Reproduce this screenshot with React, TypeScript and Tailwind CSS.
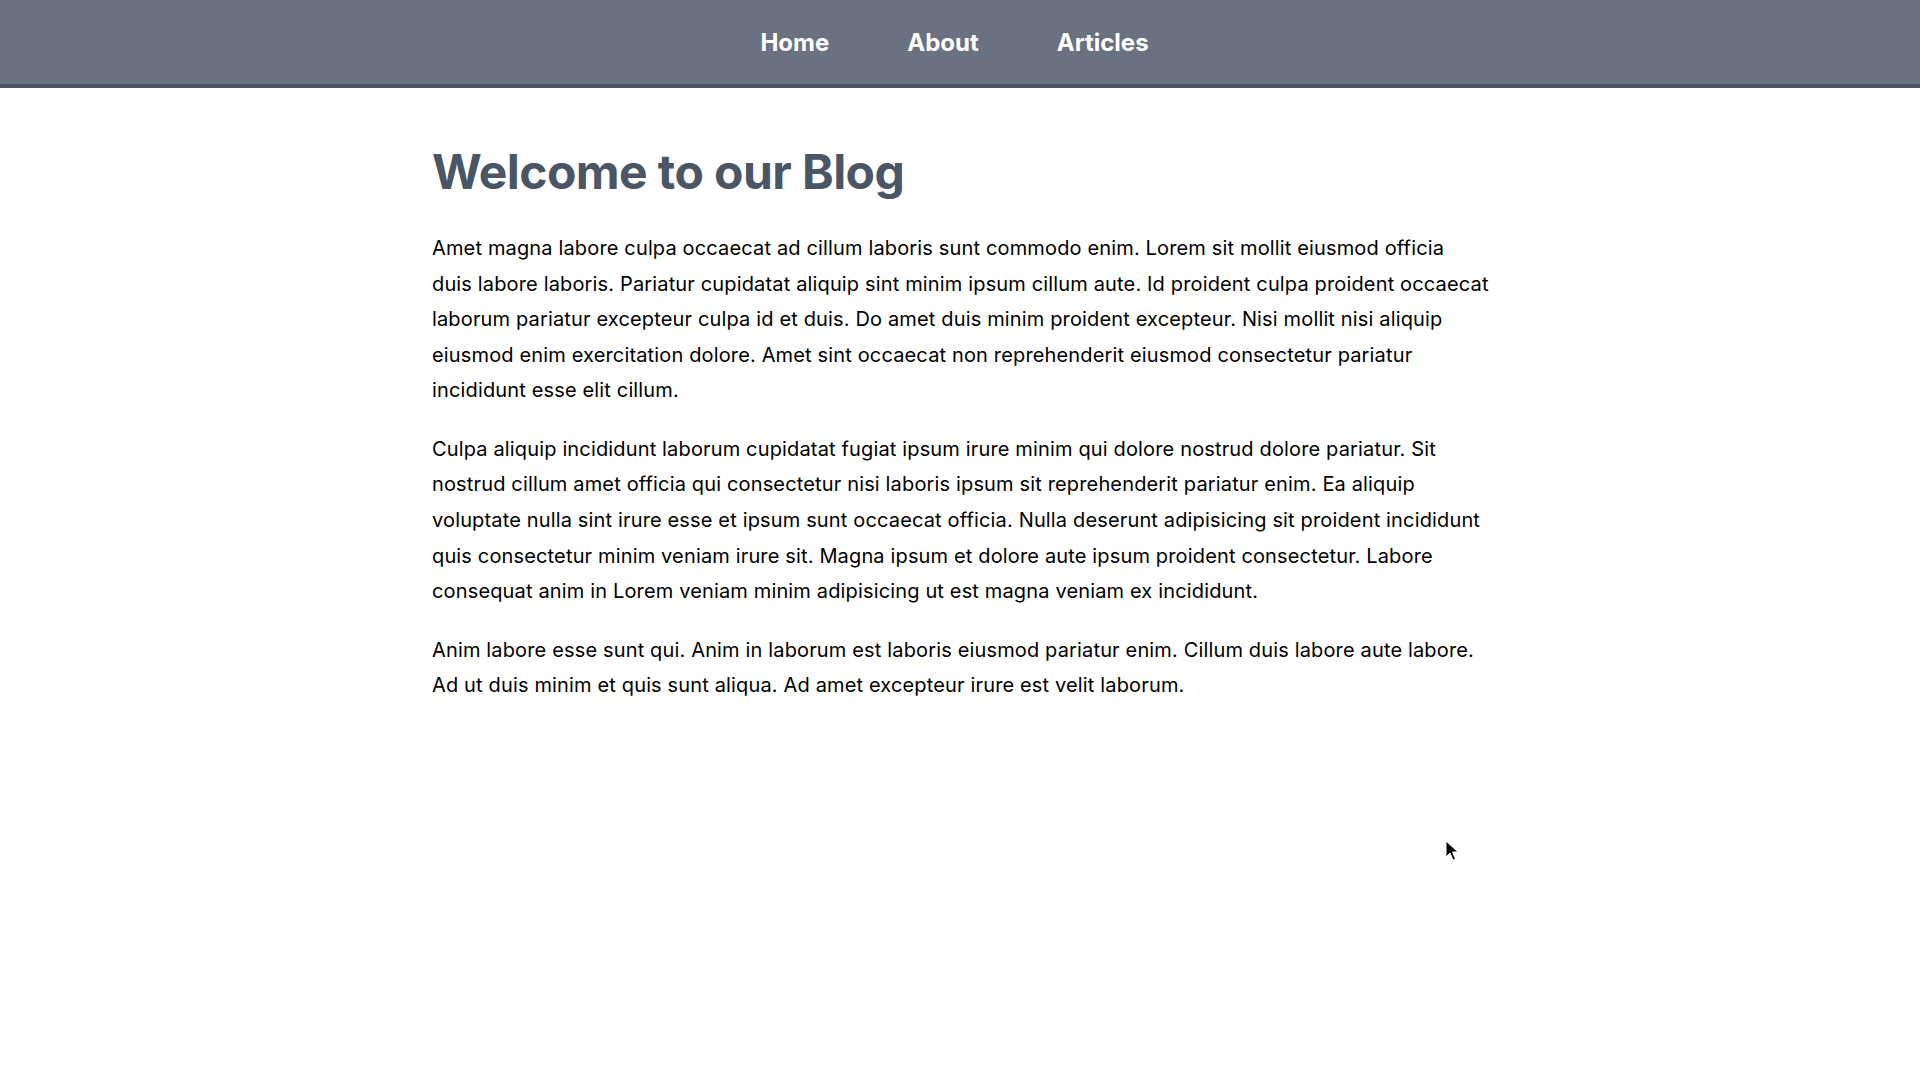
import React from 'react';

const paragraphs: React.ReactNode[] = [
  <>
    Amet magna labore culpa occaecat ad cillum laboris sunt commodo enim. Lorem sit mollit eiusmod officia
    <br />
    duis labore laboris. Pariatur cupidatat aliquip sint minim ipsum cillum aute. Id proident culpa proident occaecat laborum pariatur excepteur culpa id et duis. Do amet duis minim proident excepteur. Nisi mollit nisi aliquip eiusmod enim exercitation dolore. Amet sint occaecat non reprehenderit eiusmod consectetur pariatur incididunt esse elit cillum.
  </>,
  'Culpa aliquip incididunt laborum cupidatat fugiat ipsum irure minim qui dolore nostrud dolore pariatur. Sit nostrud cillum amet officia qui consectetur nisi laboris ipsum sit reprehenderit pariatur enim. Ea aliquip voluptate nulla sint irure esse et ipsum sunt occaecat officia. Nulla deserunt adipisicing sit proident incididunt quis consectetur minim veniam irure sit. Magna ipsum et dolore aute ipsum proident consectetur. Labore consequat anim in Lorem veniam minim adipisicing ut est magna veniam ex incididunt.',
  'Anim labore esse sunt qui. Anim in laborum est laboris eiusmod pariatur enim. Cillum duis labore aute labore. Ad ut duis minim et quis sunt aliqua. Ad amet excepteur irure est velit laborum.',
];

const links = ['Home', 'About', 'Articles'];

// mouse pointer that was caught in the screenshot
const Pointer = () => (
  <svg
    className="absolute left-[1445px] top-[840px]"
    width="14"
    height="22"
    viewBox="0 0 14 22"
  >
    <path
      d="M1 1 L1 17 L5 13 L8 20 L10.5 19 L7.5 12 L13 12 Z"
      fill="#000"
      stroke="#fff"
      strokeWidth="1"
      strokeLinejoin="round"
    />
  </svg>
);

const App = () => {
  return (
    <div className="relative min-h-screen bg-white font-['Inter',sans-serif]">
      <nav className="h-[88px] bg-gray-500 border-b-4 border-gray-600">
        <ul className="flex justify-center gap-[78px] pt-[27px] pr-[11px]">
          {links.map((l) => (
            <li key={l}>
              <a href="#" className="text-2xl font-bold text-white">
                {l}
              </a>
            </li>
          ))}
        </ul>
      </nav>

      <main className="max-w-6xl mx-auto pl-12 pr-[45px] pt-[60px]">
        <h1 className="text-5xl font-bold tracking-[-0.012em] text-gray-600 mb-[35px]">
          Welcome to our Blog
        </h1>
        {paragraphs.map((p, i) => (
          <p key={i} className="text-xl leading-[35.6px] tracking-[0.15px] text-black mb-[22.8px]">
            {p}
          </p>
        ))}
      </main>

      <Pointer />
    </div>
  );
};

export default App;
